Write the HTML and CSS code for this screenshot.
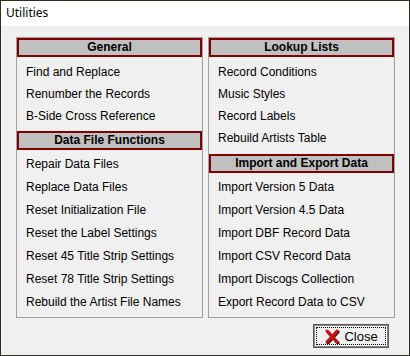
FILE: index.html
```html
<!doctype html>
<html lang="en">
<head>
  <meta charset="UTF-8">
  <title>Utilities</title>
  <link rel="stylesheet" href="styles.css">
</head>
<body>

<div class="window">
  <div class="titlebar">Utilities</div>

  <div class="content">
    <div class="panels">
      <div class="panel">
        <div class="panel-head">General</div>
        <ul class="items">
          <li>Find and Replace</li>
          <li>Renumber the Records</li>
          <li>B-Side Cross Reference</li>
        </ul>
        <div class="panel-head">Data File Functions</div>
        <ul class="items items-tall">
          <li>Repair Data Files</li>
          <li>Replace Data Files</li>
          <li>Reset Initialization File</li>
          <li>Reset the Label Settings</li>
          <li>Reset 45 Title Strip Settings</li>
          <li>Reset 78 Title Strip Settings</li>
          <li>Rebuild the Artist File Names</li>
        </ul>
      </div>

      <div class="panel">
        <div class="panel-head">Lookup Lists</div>
        <ul class="items items-wide-gap">
          <li>Record Conditions</li>
          <li>Music Styles</li>
          <li>Record Labels</li>
          <li>Rebuild Artists Table</li>
        </ul>
        <div class="panel-head">Import and Export Data</div>
        <ul class="items items-tall">
          <li>Import Version 5 Data</li>
          <li>Import Version 4.5 Data</li>
          <li>Import DBF Record Data</li>
          <li>Import CSV Record Data</li>
          <li>Import Discogs Collection</li>
          <li>Export Record Data to CSV</li>
        </ul>
      </div>
    </div>

    <div class="footer">
      <button class="close-btn">
        <span class="focus-rect">
          <svg class="close-icon" width="16" height="16" viewBox="0 0 16 16">
            <path d="M3 3 L13 14 M13 3 L3 14" stroke="#3a2020" stroke-width="3.2" stroke-linecap="round" transform="translate(1 1)"/>
            <path d="M3 3 L13 14 M13 3 L3 14" stroke="#d01010" stroke-width="3" stroke-linecap="round"/>
          </svg>
          Close
        </span>
      </button>
    </div>
  </div>
</div>

</body>
</html>
```

FILE: styles.css
```css
body {
  margin: 0;
  background-color: #2e2d22;
  font-family: 'Liberation Sans', Arial, sans-serif;
  font-size: 12px;
  color: #000;
}

.window {
  width: 408px;
  height: 354px;
  margin: 1px;
  background-color: #f0f0f0;
  display: flex;
  flex-direction: column;
}

.titlebar {
  height: 25px;
  background-color: #fff;
  padding-left: 5px;
  font-family: 'Noto Sans', sans-serif;
  font-size: 12px;
  line-height: 24px;
}

.content {
  padding: 11px 14px 0 15px;
}

.panels {
  display: flex;
  gap: 5px;
}

.panel {
  width: 187px;
  height: 281px;
  box-sizing: border-box;
  border: 1px solid #a0a0a0;
}

.panel-head {
  height: 19px;
  box-sizing: border-box;
  border: 2px solid #800000;
  background-color: #c0c0c0;
  font-weight: bold;
  text-align: center;
  line-height: 15px;
}

.items {
  list-style: none;
  margin: 0;
  padding: 4px 0 4px 9px;
  line-height: 22px;
}

.items-wide-gap {
  padding-bottom: 5px;
}

.items-tall {
  padding-top: 3px;
  line-height: 23px;
}

.footer {
  display: flex;
  justify-content: flex-end;
  padding-top: 6px;
  padding-right: 6px;
}

.close-btn {
  width: 76px;
  height: 24px;
  box-sizing: border-box;
  padding: 2px;
  border: 1px solid #5a5a5a;
  box-shadow: inset 0 0 0 1px #8a8a8a, inset 0 0 0 2px #fff;
  background-color: #f0f0f0;
  font-family: 'Liberation Sans', Arial, sans-serif;
  font-size: 13px;
  color: #000;
}

.focus-rect {
  display: flex;
  align-items: center;
  justify-content: center;
  gap: 4px;
  height: 100%;
  box-sizing: border-box;
  border: 1px dotted #000;
}

.close-icon {
  display: block;
}
```
